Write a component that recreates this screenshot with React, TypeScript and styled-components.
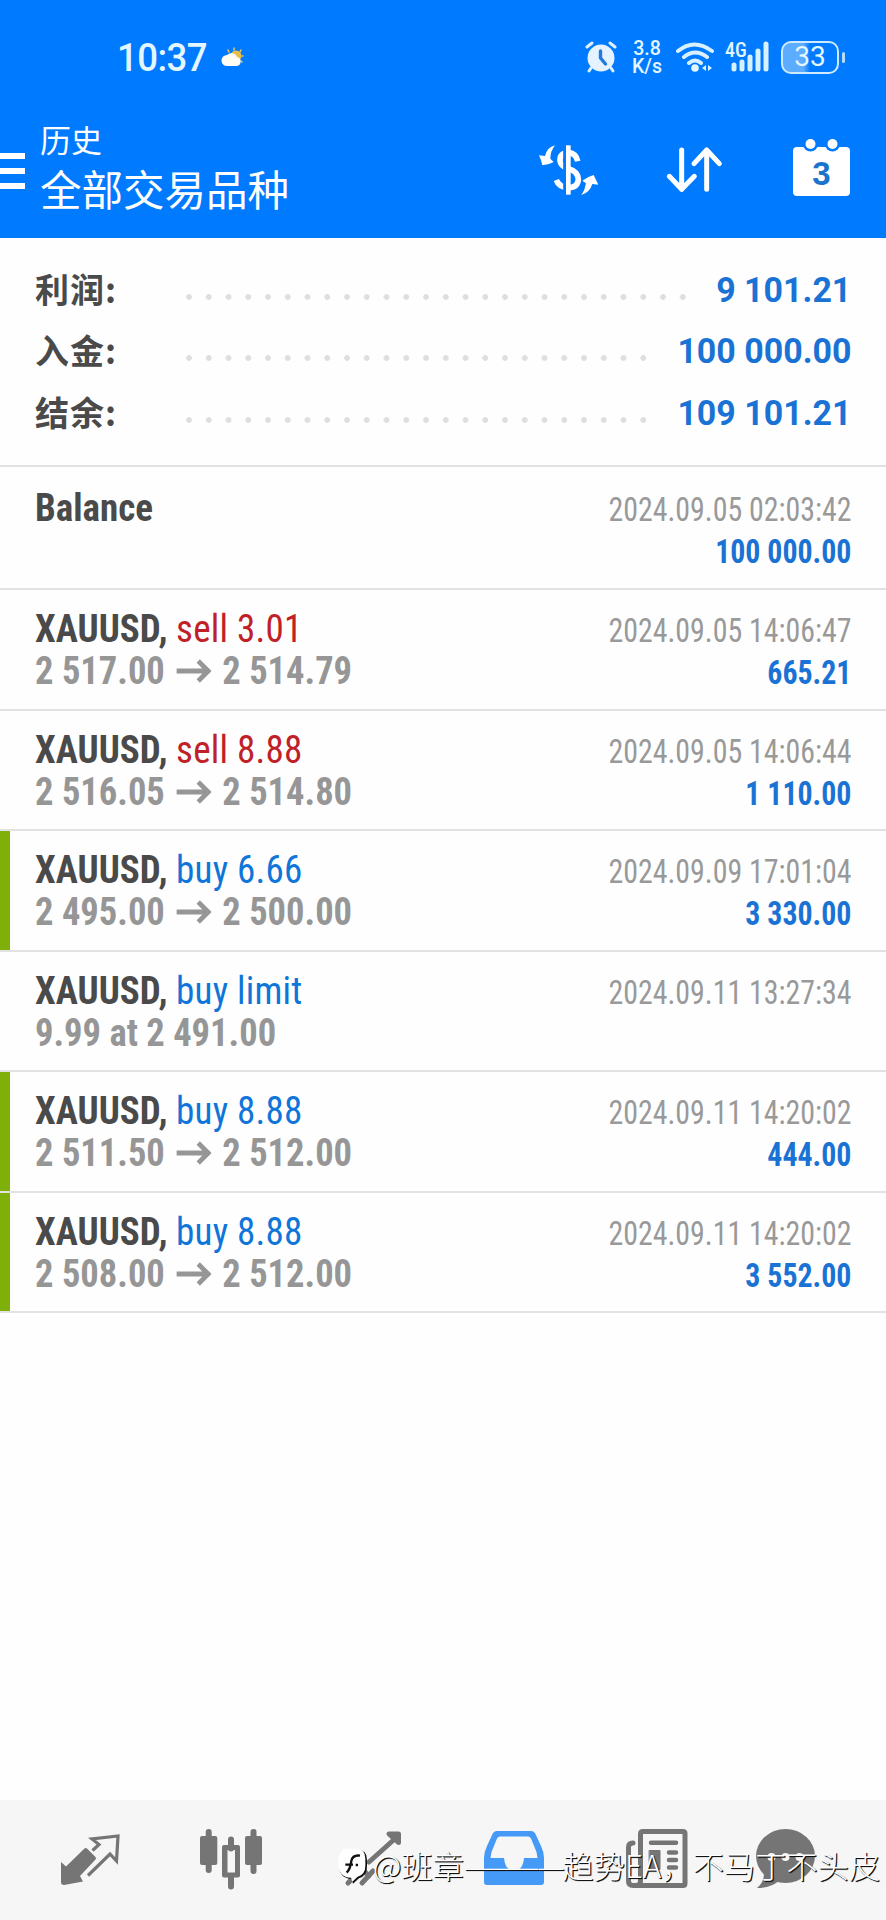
import React from "react";
import styled, { createGlobalStyle } from "styled-components";

const GlobalStyle = createGlobalStyle`
  * { box-sizing: border-box; }
  body { margin: 0; background: #fefefe; font-family: Roboto, "Noto Sans CJK SC", sans-serif; }
`;

const Screen = styled.div`
  position: relative;
  display: flex;
  flex-direction: column;
  width: 886px;
  height: 1920px;
  overflow: hidden;
  background: #fefefe;
`;

const Header = styled.header`
  height: 238px;
  background: #007aff;
  color: #fff;
`;

const StatusBar = styled.div`
  display: flex;
  align-items: center;
  height: 114px;
  padding: 0 41px 0 117px;
  color: #e4f6ff;
`;

const Clock = styled.span`
  width: 92px;
  margin: 2px 11px 0 0;
  font: 500 38px/44px Roboto, sans-serif;
  letter-spacing: -0.6px;
  white-space: nowrap;
  transform: scaleX(0.962);
  transform-origin: left;
`;

const StatusIcons = styled.div`
  display: flex;
  align-items: center;
  margin-left: auto;
`;

const Speed = styled.div`
  width: 32px;
  margin: 2px 12px 0 14px;
  font: 500 19.500px/18px Roboto, sans-serif;
  text-align: center;
`;

const Battery = styled.div`
  display: flex;
  align-items: center;
  justify-content: center;
  width: 58px;
  height: 33px;
  margin-left: 11px;
  border: 2px solid #cfeaff;
  border-radius: 10px;
  background: linear-gradient(90deg, #5cacff 0 38%, #007aff 50%);
  font: 400 28px/30px Roboto, sans-serif;
`;

const BatteryTip = styled.i`
  width: 3px;
  height: 11px;
  margin-left: 3px;
  border-radius: 2px;
  background: #b5dcff;
`;

const TitleBar = styled.div`
  display: flex;
  height: 124px;
  padding-right: 36px;
`;

const Menu = styled.div`
  display: flex;
  flex-direction: column;
  gap: 9px;
  width: 25px;
  padding-top: 39px;
`;

const MenuLine = styled.i`
  height: 6px;
  background: #fff;
`;

const Titles = styled.div`
  flex: 1;
  padding: 3px 0 0 15px;
  font-family: "Noto Sans CJK SC", sans-serif;
`;

const Subtitle = styled.div`
  font-size: 31px;
  line-height: 44px;
`;

const Title = styled.div`
  font-size: 41.5px;
  line-height: 54px;
`;

const Actions = styled.div`
  display: grid;
  grid-template-columns: 129px 128px 57px;
  align-items: start;
  padding-top: 24px;
`;

const Summary = styled.section`
  height: 229px;
  padding: 22px 35px 0 35px;
  border-bottom: 2px solid #e2e2e2;
`;

const SummaryRow = styled.div`
  display: flex;
  align-items: center;
  height: 61.5px;
`;

const SummaryLabel = styled.span`
  width: 144px;
  margin-top: -4px;
  color: #4a4a4a;
  font: 700 34px/56px "Noto Sans CJK SC", sans-serif;
  letter-spacing: 1px;
`;

const Dots = styled.span<{ $count: number }>`
  width: ${(p) => p.$count * 19.75}px;
  height: 6px;
  margin-top: 12px;
  background: radial-gradient(circle at 10px 3px, #dedede 2.5px, transparent 3.2px) 0 0 / 19.75px 6px repeat-x;
`;

const SummaryValue = styled.span`
  margin-left: auto;
  color: #1a73d4;
  font: 700 35px/60px Roboto, sans-serif;
  white-space: nowrap;
  transform: scaleX(0.97);
  transform-origin: right;
`;

const Deal = styled.article<{ $marked?: boolean; $tall?: boolean }>`
  display: flex;
  justify-content: space-between;
  height: ${(p) => (p.$tall ? 123 : 120.5)}px;
  padding: ${(p) => (p.$tall ? 20 : 18)}px 35px 0;
  border-bottom: 2px solid #e2e2e2;
  background: ${(p) => (p.$marked ? "linear-gradient(#7fb00a, #7fb00a) 0 0 / 10px 100% no-repeat" : "none")};
  font-family: "Roboto Condensed", Roboto, sans-serif;
  font-stretch: condensed;
  white-space: nowrap;
`;

const Left = styled.div`
  transform: scaleX(0.949);
  transform-origin: left;
`;

const Right = styled.div`
  padding-top: 2px;
  text-align: right;
  transform: scaleX(0.905);
  transform-origin: right;
`;

const Name = styled.div`
  color: #4a4a4a;
  font-size: 39px;
  font-weight: 700;
  line-height: 42px;
`;

const Side = styled.span<{ $sell?: boolean }>`
  color: ${(p) => (p.$sell ? "#c02128" : "#0f75d8")};
  font-weight: 400;
  letter-spacing: 0.25px;
`;

const Prices = styled.div`
  display: flex;
  align-items: center;
  color: #969696;
  font-size: 38.5px;
  font-weight: 700;
  line-height: 42px;
`;

const Time = styled.div`
  color: #999;
  font-size: 33px;
  line-height: 41px;
`;

const Profit = styled.div`
  color: #1a73d4;
  font-size: 33px;
  font-weight: 700;
  line-height: 43px;
`;

const ArrowIcon = styled.svg`
  margin: 0 11.5px 0 12px;
`;

const TabBar = styled.nav`
  display: grid;
  grid-template-columns: 141px 143px 142px 142px 130px 60px;
  height: 120px;
  margin-top: auto;
  padding: 26px 70px 0 58px;
  background: #f6f6f6;
`;

const Watermark = styled.div`
  position: absolute;
  left: 336px;
  top: 1842px;
  display: flex;
  align-items: center;
  height: 46px;
  color: #fff;
  font: 300 31px/46px "Noto Sans CJK SC", sans-serif;
  letter-spacing: 0.25px;
  text-shadow: 1px 1px 0.5px #111, 1px 1px 1px #222;
  white-space: nowrap;
`;

const Dash = styled.span`
  letter-spacing: -2.2px;
`;

const Weather = () => (
  <svg width="26" height="26" viewBox="0 0 26 26">
    <g stroke="#f4c85a" strokeWidth="1.5" strokeLinecap="round">
      <path d="M14 6V4M20 8l1-2M22 12h1M9 8L8 6M21 17l1 1" />
    </g>
    <circle cx="16" cy="12" r="5.500" fill="#e8bd4c" />
    <path d="M7 22a5.500 5.500 0 0 1 0-11 6 6 0 0 1 10 2 4.600 4.600 0 0 1 0 9z" fill="#fffdf4" />
  </svg>
);

const Alarm = () => (
  <svg width="32" height="32" viewBox="0 0 32 32" fill="none" strokeLinecap="round">
    <path d="M2 6l5-4M25 2l5 4M6 27l-2 3M26 27l2 3" stroke="#dff1ff" strokeWidth="3" />
    <circle cx="16" cy="17" r="13.500" fill="#e4f3ff" />
    <path d="M15.500 10v7l5 6" stroke="#2279e2" strokeWidth="3.400" />
  </svg>
);

const Wifi = () => (
  <svg width="40" height="32" viewBox="0 0 40 32" fill="none" stroke="#d7f1ff" strokeWidth="4" strokeLinecap="round">
    <path d="M3 10q16-13 34 0M9 16q11-9 23 0M14 22q6-5 12 0" />
    <circle cx="20" cy="27" r="3.800" fill="#e4f6ff" stroke="none" />
    <path d="M31 24v6l-4-3zM33 24v6l4-3z" fill="#d7f1ff" stroke="none" />
  </svg>
);

const Network = styled.div`
  position: relative;
  width: 45px;
  height: 32px;
  margin-left: 10px;
`;

const NetworkLabel = styled.span`
  position: absolute;
  left: 0;
  top: 0;
  font: 500 20px/18px "Roboto Condensed", Roboto, sans-serif;
  font-stretch: condensed;
`;

const Signal = () => (
  <svg width="45" height="32" viewBox="0 0 45 32" stroke="#d7f1ff" strokeWidth="5" strokeLinecap="round">
    <path d="M9 24v4M17 21v7M25 16v12M33 10v18M41 3v25" />
  </svg>
);

const Exchange = () => (
  <svg width="62" height="62" viewBox="11 20 186 186" fill="none" stroke="#fff">
    <path d="M136 90Q132 66 108 63 82 66 83 88 84 104 108 112 138 120 138 145 136 168 108 169 80 168 72 146" strokeWidth="17" />
    <path d="M97 42v148" stroke="#007aff" strokeWidth="9" />
    <path d="M108 42v148" strokeWidth="14" />
    <path d="M68 42Q44 48 38 74L20 72Q26 84 30 102 46 102 64 92L54 82Q54 60 68 42zM147 191Q158 176 161 156L150 148Q166 136 184 131 190 144 198 160L180 158Q172 184 147 191z" fill="#fff" stroke="none" />
  </svg>
);

const Sort = () => (
  <svg width="58" height="58" viewBox="495 412 174 174" fill="none" stroke="#fff" strokeWidth="15" strokeLinecap="round" strokeLinejoin="round">
    <path d="M545 448v118M508 527l37 39 38-39M620 566V448M582 489l38-41 38 41" />
  </svg>
);

const CalendarBox = styled.div`
  position: relative;
  width: 57px;
  height: 58px;
`;

const CalendarDay = styled.span`
  position: absolute;
  left: 0;
  right: 0;
  top: 20px;
  color: #1c73cc;
  font: 700 33px/32px "Liberation Sans", sans-serif;
  text-align: center;
`;

const Calendar = () => (
  <CalendarBox>
    <svg width="57" height="58" viewBox="0 0 57 58" fill="#fff">
      <rect y="9" width="57" height="49" rx="4" />
      <circle cx="17.500" cy="6" r="7.500" fill="#007aff" />
      <circle cx="39.500" cy="6" r="7.500" fill="#007aff" />
      <circle cx="17.500" cy="6" r="5" />
      <circle cx="39.500" cy="6" r="5" />
    </svg>
    <CalendarDay>3</CalendarDay>
  </CalendarBox>
);

const PriceArrow = () => (
  <ArrowIcon width="37" height="26" viewBox="0 0 37 26" fill="none" stroke="#969696" strokeWidth="5">
    <path d="M0 13h33M23 3l10.500 10-10.500 10" />
  </ArrowIcon>
);

const QuotesIcon = () => (
  <svg width="64" height="64" viewBox="0 0 64 64">
    <path d="M26.500 22.500q1.500-1 3 .5l8 8q1 1.500 0 2.500L22 50l3 5.500-19 3.500q-3 0-3-3V36l5 4.500z" fill="#757575" />
    <path d="M34.500 24.500L41 18.500 34 13l26-3-1.500 25-6.500-7-22 21.500" fill="none" stroke="#757575" strokeWidth="3.200" />
  </svg>
);

const ChartIcon = () => (
  <svg width="64" height="66" viewBox="0 0 64 66" fill="#757575">
    <path d="M9.700 6v38M54.500 6v39M32 13.500v9M32 50v10.500" stroke="#757575" strokeWidth="6" strokeLinecap="round" />
    <rect x="1" y="10" width="17.300" height="29" rx="2" />
    <rect x="46" y="10" width="17" height="29" rx="2" />
    <path fillRule="evenodd" d="M25 19h14q2 0 2 2v28.500q0 2-2 2H25q-2 0-2-2V21q0-2 2-2zM28.500 24v22.500H36V24z" />
  </svg>
);

const TradeIcon = () => (
  <svg width="64" height="64" viewBox="0 0 64 64" fill="none" stroke="#757575" strokeWidth="5" strokeLinecap="round" strokeLinejoin="round">
    <path d="M6 57l14-14 7 7M27 36L56 10M20 57l11-12" />
    <path d="M47 8h9.500v8.500z" fill="#757575" />
  </svg>
);

const InboxIcon = () => (
  <svg width="60" height="64" viewBox="0 0 60 64">
    <path fillRule="evenodd" fill="#4599f7" d="M13 5h34q3 0 4.500 3L57 20q3 6 3 12v24q0 3-3 3H3q-3 0-3-3V32q0-6 3-12L8.500 8Q10 5 13 5zM16 10.500q-2 0-3 2L7.500 26 6.500 32H20q1 12.500 10 12.500T40 32h13.500l-1-6L47 12.500q-1-2-3-2z" />
  </svg>
);

const NewsIcon = () => (
  <svg width="62" height="64" viewBox="0 0 62 64" fill="none" stroke="#757575" strokeWidth="5" strokeLinecap="round" strokeLinejoin="round">
    <path d="M17 5.500h40q2 0 2 2v50q0 2-2 2H7q-4.500 0-4.500-4.500V21q0-4 4.500-4M14.500 8v47q0 4.500-4.500 4.500M17 5.500q-2.500 0-2.500 2.500" />
    <path d="M25 16.700h25M43 26.500h7M43 34h7M43 41.500h7" strokeWidth="4.500" />
    <rect x="23.500" y="24.500" width="10.500" height="19" fill="#757575" strokeWidth="1" />
  </svg>
);

const ChatIcon = () => (
  <svg width="60" height="64" viewBox="0 0 60 64">
    <path d="M8 44q1 12-7 18 13 0 22-7z" fill="#757575" />
    <ellipse cx="29.500" cy="30" rx="29.500" ry="27" fill="#757575" />
    <g fill="#f6f6f6"><circle cx="15.500" cy="31" r="4" /><circle cx="29.500" cy="31" r="4" /><circle cx="43.500" cy="31" r="4" /></g>
  </svg>
);

const WatermarkLogo = () => (
  <svg width="37" height="38" viewBox="21 90 111 114">
    <path d="M58 101h28q28 0 28 30v22q0 26-24 34l-18 16-4-14q-38-2-38-42 0-46 28-46z" fill="#111" />
    <path d="M54 98h28q27 0 27 30v22q0 26-24 33l-15 14-4-12q-38-2-38-42 0-45 26-45z" fill="#fff" />
    <path d="M93 119q-22-3-26 16-3 24-14 35M49 146h23M80 147h7" fill="none" stroke="#111" strokeWidth="7" />
  </svg>
);

type DealData = {
  symbol: string;
  side?: string;
  sell?: boolean;
  from?: string;
  to?: string;
  time: string;
  profit?: string;
  marked?: boolean;
};

const summary = [
  { label: "利润:", value: "9 101.21", dots: 26 },
  { label: "入金:", value: "100 000.00", dots: 24 },
  { label: "结余:", value: "109 101.21", dots: 24 },
];

const deals: DealData[] = [
  { symbol: "Balance", time: "2024.09.05 02:03:42", profit: "100 000.00" },
  { symbol: "XAUUSD,", side: "sell 3.01", sell: true, from: "2 517.00", to: "2 514.79", time: "2024.09.05 14:06:47", profit: "665.21" },
  { symbol: "XAUUSD,", side: "sell 8.88", sell: true, from: "2 516.05", to: "2 514.80", time: "2024.09.05 14:06:44", profit: "1 110.00" },
  { symbol: "XAUUSD,", side: "buy 6.66", from: "2 495.00", to: "2 500.00", time: "2024.09.09 17:01:04", profit: "3 330.00", marked: true },
  { symbol: "XAUUSD,", side: "buy limit", from: "9.99 at 2 491.00", time: "2024.09.11 13:27:34" },
  { symbol: "XAUUSD,", side: "buy 8.88", from: "2 511.50", to: "2 512.00", time: "2024.09.11 14:20:02", profit: "444.00", marked: true },
  { symbol: "XAUUSD,", side: "buy 8.88", from: "2 508.00", to: "2 512.00", time: "2024.09.11 14:20:02", profit: "3 552.00", marked: true },
];

export default function App() {
  return (
    <Screen>
      <GlobalStyle />
      <Header>
        <StatusBar>
          <Clock>10:37</Clock>
          <Weather />
          <StatusIcons>
            <Alarm />
            <Speed>3.8<br />K/s</Speed>
            <Wifi />
            <Network><NetworkLabel>4G</NetworkLabel><Signal /></Network>
            <Battery>33</Battery>
            <BatteryTip />
          </StatusIcons>
        </StatusBar>
        <TitleBar>
          <Menu><MenuLine /><MenuLine /><MenuLine /></Menu>
          <Titles>
            <Subtitle>历史</Subtitle>
            <Title>全部交易品种</Title>
          </Titles>
          <Actions><Exchange /><Sort /><Calendar /></Actions>
        </TitleBar>
      </Header>
      <Summary>
        {summary.map((s) => (
          <SummaryRow key={s.label}>
            <SummaryLabel>{s.label}</SummaryLabel>
            <Dots $count={s.dots} />
            <SummaryValue>{s.value}</SummaryValue>
          </SummaryRow>
        ))}
      </Summary>
      {deals.map((d, i) => (
        <Deal key={i} $marked={d.marked} $tall={i === 0}>
          <Left>
            <Name>{d.symbol} {d.side && <Side $sell={d.sell}>{d.side}</Side>}</Name>
            {d.from && <Prices>{d.from}{d.to && <><PriceArrow />{d.to}</>}</Prices>}
          </Left>
          <Right>
            <Time>{d.time}</Time>
            {d.profit && <Profit>{d.profit}</Profit>}
          </Right>
        </Deal>
      ))}
      <TabBar>
        <QuotesIcon /><ChartIcon /><TradeIcon /><InboxIcon /><NewsIcon /><ChatIcon />
      </TabBar>
      <Watermark><WatermarkLogo />@班章<Dash>————</Dash>趋势EA，不马丁不头皮</Watermark>
    </Screen>
  );
}
